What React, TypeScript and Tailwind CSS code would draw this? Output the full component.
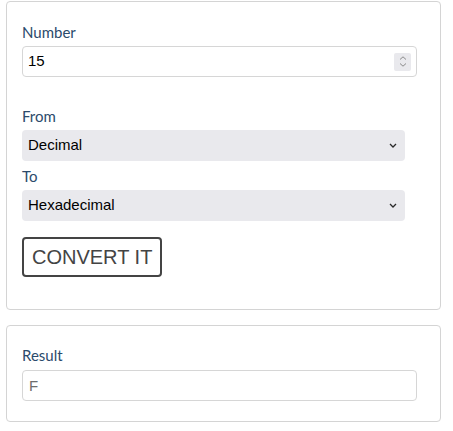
import * as React from "react";

const labelCls =
  "block h-[24px] text-[15px] leading-[22px] text-[#2b4a6b] font-['Lato',sans-serif]";
const fieldFont = "font-['Liberation_Sans',Arial,sans-serif] text-[15px]";

const Chevron = () => (
  <svg width="8" height="5" viewBox="0 0 8 5" className="shrink-0">
    <path d="M1 1 L4 4 L7 1" fill="none" stroke="#2a2a2a" strokeWidth="1.3" />
  </svg>
);

const Spinner = () => (
  <div className="w-[17px] h-[18px] bg-[#e9e9ed] rounded-[2px] flex flex-col items-center justify-center gap-[3px]">
    <svg width="8" height="4" viewBox="0 0 8 4">
      <path d="M1 3.5 L4 0.8 L7 3.5" fill="none" stroke="#8a8a8a" strokeWidth="1" />
    </svg>
    <svg width="8" height="4" viewBox="0 0 8 4">
      <path d="M1 0.5 L4 3.2 L7 0.5" fill="none" stroke="#8a8a8a" strokeWidth="1" />
    </svg>
  </div>
);

const SelectBox = ({ value, options }: { value: string; options: string[] }) => {
  const [v, setV] = React.useState(value);
  return (
    <div className="relative w-[383px] h-[31px] mt-[1px]">
      <select
        value={v}
        onChange={(e) => setV(e.target.value)}
        className={`appearance-none w-full h-full bg-[#e9e9ed] rounded-[4px] pl-[6px] text-black outline-none ${fieldFont}`}
      >
        {options.map((o) => (
          <option key={o}>{o}</option>
        ))}
      </select>
      <div className="pointer-events-none absolute right-[8px] top-[13px] flex">
        <Chevron />
      </div>
    </div>
  );
};

const bases = ["Binary", "Octal", "Decimal", "Hexadecimal"];

export default function App() {
  const [num, setNum] = React.useState("15");

  return (
    <div className="min-h-screen bg-white pl-[6px] pt-[1px]">
      {/* Converter card */}
      <div className="w-[435px] border border-[#d4d4d4] rounded-[4px] px-[15px] pt-[19px] pb-[32px]">
        <label className={labelCls}>Number</label>
        <div className="mt-[1px] w-[395px] h-[31px] border border-[#d6d6d6] rounded-[4px] flex items-center pl-[5px] pr-[5px]">
          <input
            value={num}
            onChange={(e) => setNum(e.target.value)}
            className={`flex-1 min-w-0 bg-transparent outline-none text-black ${fieldFont}`}
          />
          <Spinner />
        </div>

        <label className={`${labelCls} mt-[28px]`}>From</label>
        <SelectBox value="Decimal" options={bases} />

        <label className={`${labelCls} mt-[4px]`}>To</label>
        <SelectBox value="Hexadecimal" options={bases} />

        <button className="mt-[16px] h-[40px] px-[8px] border-2 border-[#444] rounded-[4px] text-[#444] text-[20px] font-['Liberation_Sans',Arial,sans-serif] bg-white">
          CONVERT IT
        </button>
      </div>

      {/* Result card */}
      <div className="mt-[15px] w-[435px] border border-[#d4d4d4] rounded-[4px] px-[15px] pt-[18px] pb-[20px]">
        <label className={labelCls}>Result</label>
        <input
          readOnly
          value="F"
          className={`mt-[2px] block w-[395px] h-[31px] border border-[#d6d6d6] rounded-[4px] pl-[6px] text-[#6d6d6d] outline-none ${fieldFont}`}
        />
      </div>
    </div>
  );
}
